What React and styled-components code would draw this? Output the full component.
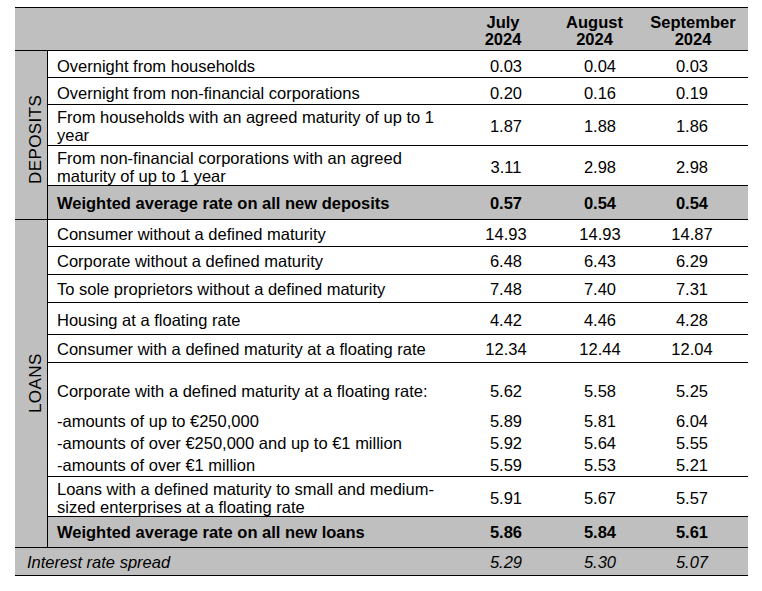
import React from 'react';
import styled, { createGlobalStyle } from 'styled-components';

const deposits = [
  { label: 'Overnight from households', values: ['0.03', '0.04', '0.03'], h: 27, shift: 3 },
  { label: 'Overnight from non-financial corporations', values: ['0.20', '0.16', '0.19'], h: 27, shift: 3 },
  { label: 'From households with an agreed maturity of up to 1 year', values: ['1.87', '1.88', '1.86'], h: 41, shift: 2 },
  { label: 'From non-financial corporations with an agreed maturity of up to 1 year', values: ['3.11', '2.98', '2.98'], h: 40, shift: 2 },
  { label: 'Weighted average rate on all new deposits', values: ['0.57', '0.54', '0.54'], h: 33, total: true, last: true },
];

const loans = [
  { label: 'Consumer without a defined maturity', values: ['14.93', '14.93', '14.87'], h: 27, shift: 1 },
  { label: 'Corporate without a defined maturity', values: ['6.48', '6.43', '6.29'], h: 28 },
  { label: 'To sole proprietors without a defined maturity', values: ['7.48', '7.40', '7.31'], h: 28 },
  { label: 'Housing at a floating rate', values: ['4.42', '4.46', '4.28'], h: 32, shift: 3 },
  { label: 'Consumer with a defined maturity at a floating rate', values: ['12.34', '12.44', '12.04'], h: 28 },
  {
    label: 'Corporate with a defined maturity at a floating rate:',
    values: ['5.62', '5.58', '5.25'],
    h: 47,
    shift: 8,
    subs: [
      { label: '-amounts of up to €250,000', values: ['5.89', '5.81', '6.04'] },
      { label: '-amounts of over €250,000 and up to €1 million', values: ['5.92', '5.64', '5.55'] },
      { label: '-amounts of over €1 million', values: ['5.59', '5.53', '5.21'] },
    ],
  },
  { label: 'Loans with a defined maturity to small and medium-sized enterprises at a floating rate', values: ['5.91', '5.67', '5.57'], h: 40, shift: 2 },
  { label: 'Weighted average rate on all new loans', values: ['5.86', '5.84', '5.61'], h: 30, total: true, last: true },
];

const GlobalStyle = createGlobalStyle`
  * { box-sizing: border-box; }
  body {
    margin: 0;
    background: #fff;
    color: #000;
    font-family: "Liberation Sans", Arial, sans-serif;
  }
`;

const Page = styled.div`
  padding: 7px 15px;
`;

const Table = styled.div`
  width: 733px;
  border-top: 1px solid #000;
  font-size: 16.5px;
`;

const HeaderRow = styled.div`
  display: grid;
  grid-template-columns: 440px 96px 87px 110px;
  align-items: center;
  height: 43px;
  padding-top: 4px;
  background: #bfbfbf;
  border-bottom: 1px solid #000;
`;

const HeadCell = styled.div`
  text-align: center;
  font-weight: bold;
  font-size: 16.5px;
  line-height: 17px;
`;

const Section = styled.div`
  display: flex;
  border-bottom: 1px solid #000;
`;

/* rotated 180deg, so right/bottom padding shows up on the left/top */
const SideLabel = styled.div`
  width: 33px;
  flex: none;
  display: flex;
  align-items: center;
  justify-content: center;
  padding-right: 10px;
  padding-bottom: ${(p) => p.$offset || 0}px;
  background: #bfbfbf;
  border-left: 1px solid #000;
  font-size: 17px;
  line-height: 20px;
  letter-spacing: 0.4px;
  writing-mode: vertical-rl;
  transform: rotate(180deg);
`;

const Rows = styled.div`
  width: 700px;
`;

const Row = styled.div`
  display: grid;
  grid-template-columns: 407px 102px 86px 98px;
  padding-right: 7px;
  align-items: center;
  height: ${(p) => p.$h}px;
  padding-top: ${(p) => p.$shift || 0}px;
  border-bottom: ${(p) => (p.$last ? 'none' : '1px solid #000')};
  background: ${(p) => (p.$total ? '#bfbfbf' : '#fff')};
  font-weight: ${(p) => (p.$total ? 'bold' : 'normal')};
  line-height: 18px;
`;

const Group = styled.div`
  border-bottom: 1px solid #000;
`;

const Label = styled.div`
  padding: 0 10px 0 9px;
`;

const Value = styled.div`
  text-align: center;
`;

const SpreadRow = styled.div`
  display: grid;
  grid-template-columns: 440px 102px 86px 98px;
  padding-right: 7px;
  align-items: center;
  height: 28px;
  background: #bfbfbf;
  border-bottom: 1px solid #000;
  font-style: italic;
  line-height: 18px;
`;

const SpreadLabel = styled.div`
  padding-left: 12px;
`;

const DataRow = ({ item, h, shift, noBorder }) => (
  <Row
    $h={h ?? item.h}
    $shift={shift ?? item.shift}
    $total={item.total}
    $last={noBorder || item.last}
  >
    <Label>{item.label}</Label>
    {item.values.map((v, i) => (
      <Value key={i}>{v}</Value>
    ))}
  </Row>
);

const SectionBlock = ({ title, rows, offset }) => (
  <Section>
    <SideLabel $offset={offset}>{title}</SideLabel>
    <Rows>
      {rows.map((item, i) =>
        item.subs ? (
          <Group key={i}>
            <DataRow item={item} noBorder />
            {item.subs.map((sub, j) => (
              <DataRow key={j} item={sub} h={22} shift={0} noBorder />
            ))}
          </Group>
        ) : (
          <DataRow key={i} item={item} />
        )
      )}
    </Rows>
  </Section>
);

export default function App() {
  return (
    <Page>
      <GlobalStyle />
      <Table>
        <HeaderRow>
          <div />
          <HeadCell>July<br />2024</HeadCell>
          <HeadCell>August<br />2024</HeadCell>
          <HeadCell>September<br />2024</HeadCell>
        </HeaderRow>
        <SectionBlock title="DEPOSITS" rows={deposits} offset={9} />
        <SectionBlock title="LOANS" rows={loans} />
        <SpreadRow>
          <SpreadLabel>Interest rate spread</SpreadLabel>
          <Value>5.29</Value>
          <Value>5.30</Value>
          <Value>5.07</Value>
        </SpreadRow>
      </Table>
    </Page>
  );
}
